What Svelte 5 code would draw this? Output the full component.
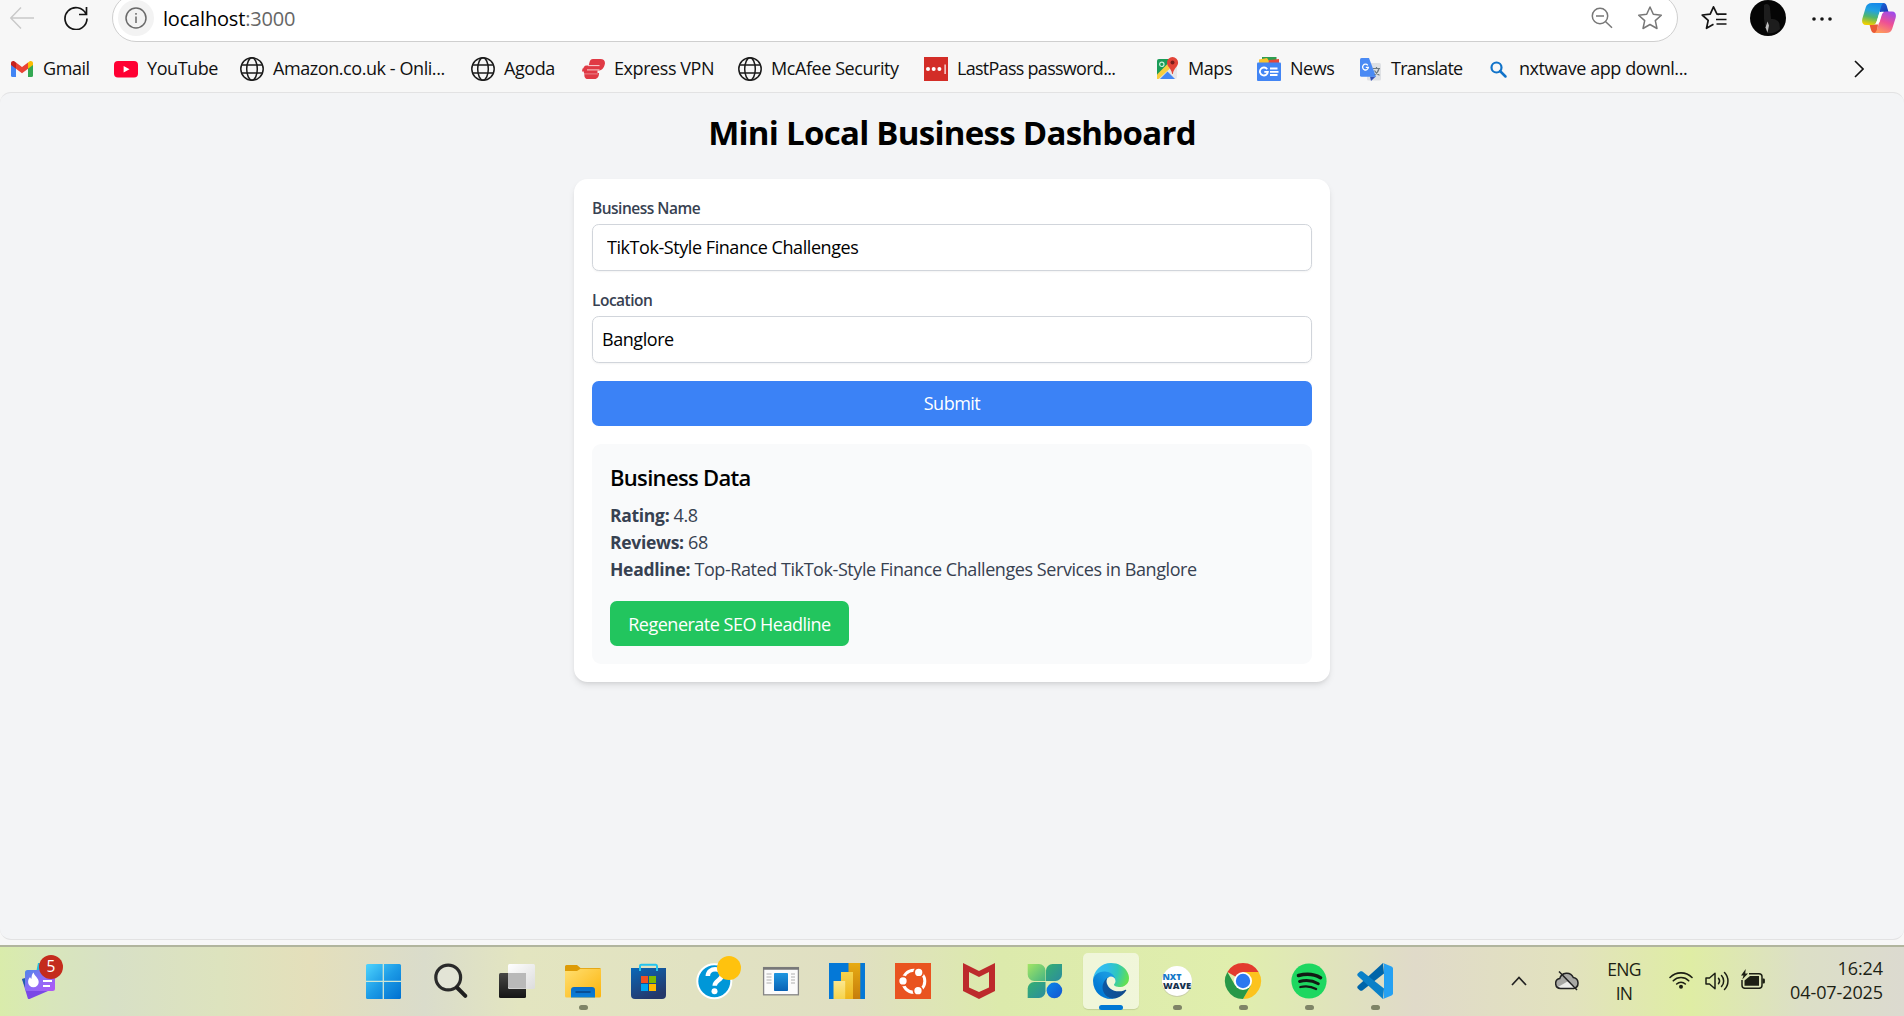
<script>
  const bookmarks = [
    { icon: 'gmail', label: 'Gmail' },
    { icon: 'youtube', label: 'YouTube' },
    { icon: 'globe', label: 'Amazon.co.uk - Onli...' },
    { icon: 'globe', label: 'Agoda' },
    { icon: 'vpn', label: 'Express VPN' },
    { icon: 'globe', label: 'McAfee Security' },
    { icon: 'lastpass', label: 'LastPass password...', tight: true },
    { icon: 'maps', label: 'Maps' },
    { icon: 'news', label: 'News' },
    { icon: 'translate', label: 'Translate', tight: true },
    { icon: 'find', label: 'nxtwave app downl...' }
  ];

  const apps = [
    { icon: 'windows' },
    { icon: 'search' },
    { icon: 'taskview' },
    { icon: 'folder', running: true },
    { icon: 'store' },
    { icon: 'help' },
    { icon: 'window' },
    { icon: 'powerbi' },
    { icon: 'ubuntu' },
    { icon: 'mcafee' },
    { icon: 'clover' },
    { icon: 'edge', active: true },
    { icon: 'nxtwave', running: true },
    { icon: 'chrome', running: true },
    { icon: 'spotify', running: true },
    { icon: 'vscode', running: true }
  ];

  let businessName = $state('TikTok-Style Finance Challenges');
  let location = $state('Banglore');
</script>

{#snippet mark(name)}
  <svg class="mark" viewBox="0 0 24 24" aria-hidden="true">
    {#if name === 'gmail'}
      <path d="M1 6.500v12A1.500 1.500 0 0 0 2.500 20H6V10.500z" fill="#4285f4" />
      <path d="M23 6.500v12a1.500 1.500 0 0 1-1.500 1.500H18v-9.500z" fill="#34a853" />
      <path d="M18 5.500l1.700-1.200C21 3.300 23 4.200 23 6v2l-5 3.800z" fill="#fbbc04" />
      <path d="M6 5.500L4.300 4.300C3 3.300 1 4.200 1 6v2l5 3.800z" fill="#c5221f" />
      <path d="M6 5.500l6 4.500 6-4.500v6.300L12 16.300 6 11.800z" fill="#ea4335" />
    {:else if name === 'youtube'}
      <rect x="0" y="4" width="24" height="16.500" rx="4" fill="#ff0033" />
      <path d="M9.600 9v6.500l5.900-3.250z" fill="#fff" />
    {:else if name === 'globe'}
      <g fill="none" stroke="#1b1b1b" stroke-width="1.500">
        <circle cx="12" cy="12" r="11.200" />
        <ellipse cx="12" cy="12" rx="5.300" ry="11.200" />
        <path d="M2 8h20M2 16h20" />
      </g>
    {:else if name === 'vpn'}
      <g fill="#e03a45">
        <path d="M12 2h7.500c3.300 0 5 2.200 4.300 5.200-.8 3.600-2.800 6.300-6.300 6.300H1.800c.4-3 1.400-5 3.700-5h2.200l.6-2.500C9 3.300 9.800 2 12 2z" />
        <path d="M1.500 11.500h15v5h-12c-1.500 0-1.800-.7-1.700-2H1z" />
        <path d="M3.500 16h14.500c0 3.500-1.500 6-4.500 6H6.500c-2.700 0-3.500-2.500-3-6z" />
      </g>
      <path d="M7 8.600h11.500M6 12.900h12.500" stroke="#f9e3e4" stroke-width=".9" />
      <path d="M4 16.900h13" stroke="#f0a3a8" stroke-width=".7" />
    {:else if name === 'lastpass'}
      <rect width="24" height="24" fill="#d32d27" />
      <g fill="#fff"><circle cx="4" cy="12" r="2" /><circle cx="9.700" cy="12" r="2" /><circle cx="15.400" cy="12" r="2" /><rect x="20.500" y="7.500" width="1.200" height="9.500" /></g>
    {:else if name === 'maps'}
      <rect x="2" y="2" width="20" height="20" rx="2" fill="#e7e7e7" />
      <path d="M2 4a2 2 0 0 1 2-2h14L2 19z" fill="#1a9c58" />
      <path d="M2 17.500L17 2.500 21 6 3.500 22H2z" fill="#f8ce3f" />
      <path d="M5 22l7.500-7.500L20 22z" fill="#4387f4" />
      <circle cx="6.800" cy="7.300" r="2.200" fill="none" stroke="#c9efd8" stroke-width="1.200" />
      <path d="M17.500 0a5.600 5.600 0 0 1 5.600 5.600c0 4.400-4.200 5.300-5.300 11.400h-.6C16.100 10.900 12 10 12 5.600A5.600 5.600 0 0 1 17.500 0z" fill="#e24438" />
      <circle cx="17.500" cy="5.600" r="2" fill="#7b1f1c" />
    {:else if name === 'news'}
      <path d="M5 0h14.500v6H5z" fill="#2f9e4f" />
      <path d="M2 2.500l8-1.500 4 6H2z" fill="#f9c22d" />
      <path d="M12 3l10-1v6H11z" fill="#e5483a" />
      <rect y="5.500" width="24" height="18.500" rx="1" fill="#4285f4" />
      <path d="M10.200 12.200a4 4 0 1 0 .7 2.600H7.300M13 11.500h7.500M13 14.800h8.500M13 18h7.500" fill="none" stroke="#fff" stroke-width="1.800" />
    {:else if name === 'translate'}
      <rect x="9" y="6" width="14" height="17.500" rx="1.500" fill="#dfe1e4" />
      <path d="M12 19.500h5.800L13 24z" fill="#3452b5" />
      <path d="M3.500 1H11l7 18.800H3.500A1.500 1.500 0 0 1 2 18.300V2.500A1.500 1.500 0 0 1 3.500 1z" fill="#4a8af4" />
      <path d="M9.800 8.300a2.900 2.900 0 1 0 .6 2H7.800" fill="none" stroke="#fff" stroke-width="1.300" />
      <path d="M15 11.500h7M18.500 10v1.500M21 11.500c-.7 3-2.500 5-4.500 6.200M16.500 13.500c1 2 3 4 5 4.800" fill="none" stroke="#6d7a80" stroke-width="1.200" />
    {:else if name === 'find'}
      <circle cx="10.500" cy="10.500" r="5" fill="none" stroke="#1173c9" stroke-width="2.200" />
      <path d="M14 14l5.500 5.500" stroke="#1173c9" stroke-width="2.500" stroke-linecap="round" />
    {/if}
  </svg>
{/snippet}

{#snippet app(name)}
  <svg class="app-icon" viewBox="0 0 36 36" aria-hidden="true">
    {#if name === 'windows'}
      <defs>
        <linearGradient id="win" x1="0" y1="0" x2="1" y2="1"><stop offset="0" stop-color="#4fd4fd" /><stop offset=".5" stop-color="#1c9be6" /><stop offset="1" stop-color="#0070d0" /></linearGradient>
      </defs>
      <rect x="-1" y="1" width="35" height="35" rx="1.500" fill="url(#win)" />
      <path d="M16.300 1v35M-1 18.300h35" stroke="#cfe6d5" stroke-width="1.300" />
    {:else if name === 'search'}
      <circle cx="15.200" cy="14.500" r="12.400" fill="#e6e7dc" fill-opacity=".7" stroke="#2a2a2a" stroke-width="3.200" />
      <path d="M24 24.500l8.300 8.300" stroke="#1f1f1f" stroke-width="4" stroke-linecap="round" />
    {:else if name === 'taskview'}
      <defs>
        <linearGradient id="tvd" x1="0" y1="0" x2="0" y2="1"><stop offset="0" stop-color="#474745" /><stop offset="1" stop-color="#151515" /></linearGradient>
        <linearGradient id="tvl" x1="0" y1="0" x2="1" y2="1"><stop offset="0" stop-color="#fff" /><stop offset="1" stop-color="#dcdcdc" /></linearGradient>
      </defs>
      <rect x="0" y="10" width="27" height="25" rx="1.500" fill="url(#tvd)" />
      <rect x="9" y="1" width="27" height="25" rx="1.500" fill="url(#tvl)" />
      <path d="M9 10h18v15.500H10.500L9 24z" fill="#b9b9b9" />
    {:else if name === 'folder'}
      <defs>
        <linearGradient id="fol" x1="0" y1="0" x2="1" y2="1"><stop offset="0" stop-color="#ffdf71" /><stop offset="1" stop-color="#fcb40c" /></linearGradient>
        <linearGradient id="folb" x1="0" y1="0" x2="0" y2="1"><stop offset="0" stop-color="#0a6cc4" /><stop offset="1" stop-color="#0a7fd9" /></linearGradient>
      </defs>
      <path d="M0 3.500A1.500 1.500 0 0 1 1.500 2H12l3.500 3H34.500A1.500 1.500 0 0 1 36 6.500V12H0z" fill="#dd9b06" />
      <path d="M0 8h12l3.500-2.300H36V33a1.500 1.500 0 0 1-1.500 1.500h-33A1.500 1.500 0 0 1 0 33z" fill="url(#fol)" />
      <path d="M6 34.500V27a3 3 0 0 1 3-3h18a3 3 0 0 1 3 3v7.500z" fill="url(#folb)" />
      <path d="M10.500 29h15" stroke="#08498c" stroke-width="1.700" />
    {:else if name === 'store'}
      <defs>
        <linearGradient id="sto" x1="0" y1="0" x2=".5" y2="1"><stop offset="0" stop-color="#0a68b8" /><stop offset="1" stop-color="#24386b" /></linearGradient>
      </defs>
      <path d="M0 5h35v27a4 4 0 0 1-4 4H4a4 4 0 0 1-4-4z" fill="url(#sto)" />
      <path d="M9 8V3a1.300 1.300 0 0 1 1.300-1.300h14.500A1.300 1.300 0 0 1 26 3v5" fill="none" stroke="#24c4ef" stroke-width="2" />
      <path d="M10 13h7v7h-7z" fill="#f25022" /><path d="M18 13h7v7h-7z" fill="#7fba00" />
      <path d="M10 21h7v7h-7z" fill="#00a4ef" /><path d="M18 21h7v7h-7z" fill="#ffb900" />
    {:else if name === 'help'}
      <circle cx="17.300" cy="18.300" r="17" fill="#0097d8" stroke="#fff" stroke-width="2" />
      <path d="M10.800 13c.3-9 14.500-8.500 14.200-.8-.2 5-7.200 5.200-7.300 10.500" fill="none" stroke="#fff" stroke-width="4.500" />
      <circle cx="17.500" cy="28.200" r="3" fill="#fff" />
    {:else if name === 'window'}
      <defs><linearGradient id="wnd" x1="0" y1="0" x2="0" y2="1"><stop offset="0" stop-color="#1e96e0" /><stop offset="1" stop-color="#0862b5" /></linearGradient></defs>
      <rect x=".6" y="4.600" width="34.800" height="27.200" fill="#fbfbfb" stroke="#858585" stroke-width="1.300" />
      <path d="M0 5.500h36" stroke="#777" stroke-width="2.500" />
      <rect x="11" y="10" width="14" height="18" rx=".8" fill="url(#wnd)" />
      <path d="M3.500 11h5m-5 3h5m-5 3h5m-5 3h5M28 11h4m-4 3h4m-4 3h4m-4 3h4" stroke="#c9c9c9" stroke-width="1.500" />
    {:else if name === 'powerbi'}
      <defs>
        <linearGradient id="pb1" x1="0" y1="0" x2="0" y2="1"><stop offset="0" stop-color="#e7ab13" /><stop offset="1" stop-color="#c67d0c" /></linearGradient>
        <linearGradient id="pb2" x1="0" y1="0" x2="0" y2="1"><stop offset="0" stop-color="#f5d34f" /><stop offset="1" stop-color="#eeb41a" /></linearGradient>
        <linearGradient id="pb3" x1="0" y1="0" x2="0" y2="1"><stop offset="0" stop-color="#fbe68e" /><stop offset="1" stop-color="#f6d44c" /></linearGradient>
      </defs>
      <path d="M0 0h36v36H0z" fill="#0478d7" />
      <path d="M19.500 0h11.800v36H19.500z" fill="url(#pb1)" />
      <path d="M12 9h12v27H12z" fill="url(#pb2)" />
      <path d="M4.500 18h11.700v18H4.500z" fill="url(#pb3)" />
    {:else if name === 'ubuntu'}
      <path d="M0 0h36v36H0z" fill="#e95420" />
      <circle cx="18.800" cy="18.300" r="11" fill="none" stroke="#fff" stroke-width="3" />
      <g fill="#fff" stroke="#e95420" stroke-width="1.700">
        <circle cx="8" cy="17.900" r="4.500" /><circle cx="23.700" cy="9.400" r="4.500" /><circle cx="23" cy="27.700" r="4.500" />
      </g>
    {:else if name === 'mcafee'}
      <path d="M2 0l16 8L34 0v28l-16 8-16-8z M8 9v15.500l10 4.500 10-4.500V9l-10 5z" fill="#bd2a2c" fill-rule="evenodd" />
    {:else if name === 'clover'}
      <defs>
        <linearGradient id="cl1" x1="0" y1="0" x2="1" y2="1"><stop offset="0" stop-color="#a2e564" /><stop offset="1" stop-color="#46b583" /></linearGradient>
        <linearGradient id="cl2" x1="0" y1="0" x2="1" y2="1"><stop offset="0" stop-color="#35b071" /><stop offset="1" stop-color="#2b8c9e" /></linearGradient>
        <linearGradient id="cl3" x1="0" y1="0" x2="1" y2="1"><stop offset="0" stop-color="#0a87ea" /><stop offset="1" stop-color="#1455d0" /></linearGradient>
      </defs>
      <path d="M.7 1H12a6.500 6.500 0 0 1 6.500 6.500V18H7.200A6.500 6.500 0 0 1 .7 11.500z" fill="url(#cl1)" />
      <path d="M35 1H25.500A6.500 6.500 0 0 0 19 7.500V18h9.500A6.500 6.500 0 0 0 35 11.500z" fill="url(#cl2)" />
      <path d="M.7 35H12a6.500 6.500 0 0 0 6.500-6.500V19H7.200A6.500 6.500 0 0 0 .7 25.500z" fill="url(#cl2)" />
      <circle cx="27.400" cy="27.400" r="7.800" fill="url(#cl3)" />
    {:else if name === 'edge'}
      <defs>
        <linearGradient id="ed1" x1="63" y1="178" x2="241" y2="178" gradientUnits="userSpaceOnUse"><stop offset="0" stop-color="#0c59a4" /><stop offset="1" stop-color="#114a8b" /></linearGradient>
        <linearGradient id="ed2" x1="157" y1="95" x2="46" y2="222" gradientUnits="userSpaceOnUse"><stop offset="0" stop-color="#1b9de2" /><stop offset=".3" stop-color="#1595df" /><stop offset=".7" stop-color="#0680d7" /><stop offset="1" stop-color="#0078d4" /></linearGradient>
        <radialGradient id="ed3" cx="26" cy="46" r="236" gradientUnits="userSpaceOnUse"><stop offset="0" stop-color="#35c1f1" /><stop offset=".35" stop-color="#31bde9" /><stop offset=".65" stop-color="#2fc7bd" /><stop offset="1" stop-color="#63e052" /></radialGradient>
      </defs>
      <g transform="scale(.1406) translate(-4.630 -4.920)">
        <path d="M235.680 195.460a93.730 93.730 0 0 1-10.540 4.710 101.870 101.870 0 0 1-35.900 6.460c-47.320 0-88.540-32.550-88.540-74.320A31.480 31.480 0 0 1 117.130 105c-42.800 1.800-53.800 46.400-53.800 72.530 0 73.880 68.090 81.370 82.760 81.370 7.910 0 19.840-2.300 27-4.560l1.310-.44a128.340 128.340 0 0 0 66.600-52.800 4 4 0 0 0-5.320-5.640z" fill="url(#ed1)" />
        <path d="M110.340 246.340A79.200 79.200 0 0 1 87.600 225a80.720 80.720 0 0 1 29.530-120c3.120-1.470 8.450-4.130 15.540-4a32.350 32.350 0 0 1 25.690 13 31.880 31.880 0 0 1 6.360 18.660c0-.21 24.460-79.600-80-79.600-43.900 0-80 41.660-80 78.210a130.150 130.150 0 0 0 12.110 56 128 128 0 0 0 156.380 67.110 75.550 75.550 0 0 1-62.780-8z" fill="url(#ed2)" />
        <path d="M156.940 153.780c-.81 1.050-3.300 2.500-3.300 5.660 0 2.610 1.700 5.120 4.720 7.230 14.380 10 41.490 8.680 41.560 8.680a59.560 59.560 0 0 0 30.270-8.350A61.380 61.380 0 0 0 260.620 114.100c.26-22.410-8-37.310-11.340-43.910C228.090 28.760 182.350 4.920 132.610 4.920a128 128 0 0 0-128 126.200C5.090 94.570 41.400 65.050 84.610 65.050c3.500 0 23.460.34 42 10.070 16.340 8.580 24.900 18.940 30.850 29.210 6.180 10.670 7.280 24.150 7.280 29.520 0 5.370-2.740 13.330-7.800 19.930z" fill="url(#ed3)" />
      </g>
    {:else if name === 'nxtwave'}
      <circle cx="18" cy="18.800" r="15.200" fill="#c9cfa8" />
      <circle cx="18" cy="18" r="15" fill="#fff" />
      <text class="nxt" x="3.500" y="16.500" textLength="19" lengthAdjust="spacingAndGlyphs">NXT</text>
      <text class="nxt dark" x="4" y="25.800" textLength="28" lengthAdjust="spacingAndGlyphs">WAVE</text>
    {:else if name === 'chrome'}
      <path d="M18 18L2.400 9A18 18 0 0 1 33.600 9z" fill="#e33b2e" />
      <path d="M18 9h15.600A18 18 0 0 1 18 36l7.800-13.500z" fill="#fcc31e" />
      <path d="M10.200 22.500L2.400 9A18 18 0 0 0 18 36l7.800-13.500z" fill="#279847" />
      <circle cx="18" cy="18" r="9" fill="#fff" /><circle cx="18" cy="18" r="7.200" fill="#2b78f0" />
    {:else if name === 'spotify'}
      <circle cx="18" cy="18" r="17.600" fill="#1ed760" />
      <g fill="none" stroke="#121a14" stroke-linecap="round">
        <path d="M7.500 12.500c7.500-2 16-1.300 22 2.200" stroke-width="3.600" />
        <path d="M8.500 18.500c6.500-1.700 13.300-.9 18.800 2.200" stroke-width="2.900" />
        <path d="M9.300 24c5.500-1.300 11-.7 15.800 2" stroke-width="2.300" />
      </g>
    {:else if name === 'vscode'}
      <path d="M26 0L1 22.700c-1 1-1 2 0 3l2 1.700c.7.600 1.600.600 2.400 0L27 10.500z" fill="#0065a9" />
      <path d="M26 36L1 13.300c-1-1-1-2 0-3l2-1.700c.7-.6 1.600-.6 2.400 0L27 25.500z" fill="#0a80c8" />
      <path d="M26 0l8.500 3.600c1 .5 1.500 1.200 1.500 2.200v24.400c0 1-.5 1.700-1.500 2.200L26 36c.7-.7 1-1.500 1-2.500v-31c0-1-.3-1.800-1-2.500z" fill="#26a1f2" />
    {/if}
  </svg>
{/snippet}

<div class="screen">
  <header class="toolbar">
    <svg class="nav back" viewBox="0 0 24 24"><path d="M11 1.500L.800 12 11 22.500M1 12h23" /></svg>
    <svg class="nav reload" viewBox="0 0 24 24"><path d="M22 8A11 11 0 1 0 23 12.500M22.500 1v7.500H15" /></svg>
    <div class="address">
      <span class="info">
        <svg viewBox="0 0 22 22"><circle cx="11" cy="11" r="10" /><path d="M11 9.500v6.500M11 6v1.700" /></svg>
      </span>
      <span class="url">localhost<span class="port">:3000</span></span>
      <svg class="zoomout" viewBox="0 0 22 22"><circle cx="9" cy="9" r="7.700" /><path d="M14.700 14.700l6.300 6M5 9h8" /></svg>
      <svg class="star" viewBox="0 0 26 26"><path d="M13 2l3.300 7.300 8 .9-6 5.400 1.700 7.900L13 19.500l-7 4 1.700-7.900-6-5.400 8-.9z" /></svg>
    </div>
    <svg class="favs" viewBox="0 0 26 26"><path d="M18 9.300l-2-.2L12.500 1.800 9.200 9.100l-8 .9 6 5.400-1.700 7.900 7-4M16.500 9.200h9M15 14.500h10.500M15.500 19h10" /></svg>
    <svg class="avatar" viewBox="0 0 36 36"><circle cx="18" cy="18" r="18" fill="#050505" /><path d="M14 5c2-2 6-1 6 3l1 11c5 0 8 2 8.500 5l.5 5c-4 4-9 5-13 4l-2-8-1-6z" fill="#1d1d1d" /><path d="M17.500 21.500l1.500 4-1.500 7-2-5z" fill="#bdbdbd" /></svg>
    <svg class="more" viewBox="0 0 20 4"><circle cx="2" cy="2" r="1.800" /><circle cx="10" cy="2" r="1.800" /><circle cx="18" cy="2" r="1.800" /></svg>
    <svg class="copilot" viewBox="0 0 34 30">
      <defs>
        <linearGradient id="co1" x1=".6" y1="0" x2=".4" y2="1"><stop offset="0" stop-color="#1488ea" /><stop offset=".35" stop-color="#22a3e0" /><stop offset=".65" stop-color="#52b66a" /><stop offset="1" stop-color="#f0d000" /></linearGradient>
        <linearGradient id="co2" x1=".7" y1="0" x2=".3" y2="1"><stop offset="0" stop-color="#a04be8" /><stop offset=".5" stop-color="#ee5095" /><stop offset="1" stop-color="#ff9a5c" /></linearGradient>
        <linearGradient id="co3" x1="0" y1="0" x2="1" y2="1"><stop offset="0" stop-color="#1c6fe0" /><stop offset="1" stop-color="#1538b0" /></linearGradient>
      </defs>
      <path d="M15 0h6.500c2 0 2.800 1.500 3.400 3.500l1.600 5.500H18z" fill="url(#co3)" />
      <path d="M7.500 21.500H16l-1 8.500h-2.500C10 30 9.300 28 8.600 25.500z" fill="#ea5a35" />
      <path d="M10 0h11.500c-1.500 1-2.200 2.500-3 5.500l-3.500 12c-.9 3-2.200 4.500-5 4.500H4c-3.500 0-4.500-3-3.600-6.500L3.700 4.500C4.600 1.500 6.500 0 10 0z" fill="url(#co1)" />
      <path d="M24 8.500h6c3.500 0 4.500 3 3.600 6.500l-3.300 10.500c-.9 3-2.800 4.500-6.300 4.500H12.500c1.500-1 2.300-2.500 3.100-5.500l3.400-11.500c.9-3 2.200-4.500 5-4.500z" fill="url(#co2)" />
      <path d="M13.500 20.500c.7-.7 1.100-1.700 1.500-3l2-6.500c.5-1.500 1.200-2.200 2.600-2.200h2.400c-1.400 1-2 2.200-2.500 4l-1.700 5.700c-.4 1.300-1.200 2-2.300 2z" fill="#fff" />
    </svg>
  </header>

  <nav class="bookmarks">
    {#each bookmarks as b}
      <a class="bookmark" class:tight={b.tight} href="#top">{@render mark(b.icon)}<span>{b.label}</span></a>
    {/each}
    <svg class="chevron" viewBox="0 0 10 18"><path d="M1 1l8 8-8 8" /></svg>
  </nav>

  <main class="page">
    <h1>Mini Local Business Dashboard</h1>
    <section class="card">
      <label class="field">
        <span class="label">Business Name</span>
        <input class="indented" bind:value={businessName} />
      </label>
      <label class="field">
        <span class="label">Location</span>
        <input bind:value={location} />
      </label>
      <button class="submit">Submit</button>
      <div class="panel">
        <h2>Business Data</h2>
        <p><strong>Rating:</strong> 4.8</p>
        <p><strong>Reviews:</strong> 68</p>
        <p><strong>Headline:</strong> Top-Rated TikTok-Style Finance Challenges Services in Banglore</p>
        <button class="regen">Regenerate SEO Headline</button>
      </div>
    </section>
  </main>

  <footer class="taskbar">
    <div class="widgets">
      <svg viewBox="0 0 33 36">
        <defs><linearGradient id="wd" x1="0" y1="0" x2="1" y2="1"><stop offset="0" stop-color="#4e86e8" /><stop offset=".5" stop-color="#8c6cf6" /><stop offset="1" stop-color="#b157f5" /></linearGradient></defs>
        <path d="M16 0h10v10H14z" fill="#22bfe0" />
        <path d="M0 16l4-1 22 13-18.500 8c-1 .3-1.500 0-1.800-1z" fill="#7a48e6" />
        <path d="M0 16l4-1v12z" fill="#1f63a8" />
        <rect x="3" y="7" width="30" height="21" rx="2.500" fill="url(#wd)" />
        <path d="M11.500 9.500c1 3.500 5.200 5.500 5.200 9.500a5.300 5.300 0 0 1-10.600 0c0-2.500 1-3.800 2-5 .3 1 .7 1.500 1.400 1.800 0-2.500.5-4.800 2-6.300z" fill="#fff" />
        <path d="M21 18h9M21 23h7" stroke="#fff" stroke-width="2" />
      </svg>
      <span class="badge">5</span>
    </div>
    <div class="apps">
      {#each apps as a}
        <div class="app" class:active={a.active} class:running={a.running}>
          {@render app(a.icon)}
          {#if a.icon === 'help'}<span class="alert"></span>{/if}
        </div>
      {/each}
    </div>
    <div class="tray">
      <svg class="up" viewBox="0 0 16 10"><path d="M1 9l7-7.500L15 9" /></svg>
      <svg class="cloud" viewBox="0 0 24 20">
        <path d="M5.500 17.500a5 5 0 0 1-.8-9.900A7.200 7.200 0 0 1 18.300 6.500a5.600 5.600 0 0 1 .3 11z" fill="#a9a9a5" />
        <path d="M3 16l9.500-5.500L21 16l-3 1.500H6z" fill="#ededea" />
        <path d="M5.500 17.500a5 5 0 0 1-.8-9.900A7.200 7.200 0 0 1 18.300 6.500a5.600 5.600 0 0 1 .3 11z" fill="none" stroke="#222" stroke-width="1.500" />
        <path d="M4 .5l18 18.500" stroke="#222" stroke-width="1.500" />
      </svg>
      <div class="lang"><span>ENG</span><span>IN</span></div>
      <svg class="wifi" viewBox="0 0 24 18"><g fill="none" stroke="#1c1f14" stroke-width="1.600" stroke-linecap="round"><path d="M1 6.500a15.500 15.500 0 0 1 22 0M4.300 9.800a10.800 10.800 0 0 1 15.400 0M7.700 13a6.200 6.200 0 0 1 8.600 0" /></g><circle cx="12" cy="15.700" r="2" fill="#1c1f14" /></svg>
      <svg class="sound" viewBox="0 0 24 20"><g fill="none" stroke="#1c1f14" stroke-width="1.500" stroke-linecap="round" stroke-linejoin="round"><path d="M1 7h3.500L10 2.300v15.400L4.500 13H1z" /><path d="M13.500 7.300c1.300 1.600 1.300 3.800 0 5.400M16.500 4.500c2.900 3.200 2.900 7.800 0 11M19.500 1.500c4.600 4.800 4.600 12.200 0 17" /></g></svg>
      <svg class="battery" viewBox="0 0 24 20"><path d="M8 4.700h10a3 3 0 0 1 3 3v8.600a3 3 0 0 1-3 3H4a3 3 0 0 1-3-3V11" fill="none" stroke="#1c1f14" stroke-width="1.500" /><path d="M21.500 9.500h1.200a1.200 1.200 0 0 1 1.200 1.200v2.600a1.200 1.200 0 0 1-1.200 1.200h-1.200zM3.500 11.500L9 7h9v9.700H3.500zM4.700 0L0 6.500h2.500L1.300 10.500 7 4.500H4.200z" fill="#1c1f14" /></svg>
      <div class="clock"><span>16:24</span><span>04-07-2025</span></div>
    </div>
  </footer>
</div>

<style>
  :global(body) { background: #f7f7f7; }
  .screen { width: 1904px; height: 1016px; display: flex; flex-direction: column; overflow: hidden; background: #f7f7f7; color: #000; font-family: "Open Sans", "Noto Sans", sans-serif; font-size: 18px; }
  svg { display: block; flex: none; }
  .toolbar { height: 42px; display: flex; flex: none; align-items: flex-start; }
  .nav { width: 24px; height: 24px; fill: none; stroke: #151515; stroke-width: 1.700; }
  .back { margin: 6px 0 0 10px; stroke: #c9c9c9; stroke-width: 1.400; }
  .reload { margin: 6px 24px 0 30px; }
  .address { width: 1566px; height: 48px; margin-top: -6px; box-sizing: border-box; border: 1px solid #cfcfcf; border-bottom-width: 1.500px; border-radius: 24px; background: #fff; display: flex; align-items: center; padding: 0 14px 0 5px; flex: none; }
  .info { width: 36px; height: 36px; border-radius: 50%; background: #f3f3f3; display: flex; align-items: center; justify-content: center; }
  .info svg { width: 22px; height: 22px; fill: none; stroke: #6a6a6a; stroke-width: 1.500; }
  .url { margin-left: 9px; flex: 1; font-size: 20px; letter-spacing: -.18px; }
  .port { color: #666; }
  .zoomout { width: 22px; height: 22px; fill: none; stroke: #777; stroke-width: 1.500; margin-right: 24px; }
  .star { width: 26px; height: 26px; fill: none; stroke: #777; stroke-width: 1.500; stroke-linejoin: round; }
  .favs { width: 26px; height: 26px; margin: 5px 0 0 23px; fill: none; stroke: #151515; stroke-width: 1.700; stroke-linejoin: round; }
  .avatar { width: 36px; height: 36px; margin-left: 23px; }
  .more { width: 20px; height: 4px; margin: 17px 0 0 26px; fill: #151515; }
  .copilot { width: 34px; height: 30px; margin: 3px 0 0 30px; }
  .bookmarks { height: 50px; flex: none; display: grid; align-items: center; padding: 4px 0 0 10px; box-sizing: border-box; grid-template-columns: 104px 126px 231px 110px 157px 186px 231px 102px 101px 128px 368px 10px; }
  .bookmark { display: flex; align-items: center; gap: 9px; color: #111; text-decoration: none; white-space: nowrap; letter-spacing: -.43px; line-height: 24px; }
  .bookmark.tight { letter-spacing: -.72px; }
  .bookmark span { margin-top: -2px; }
  .mark { width: 24px; height: 24px; }
  .chevron { width: 10px; height: 18px; fill: none; stroke: #111; stroke-width: 1.600; }
  .page { height: 848px; box-sizing: border-box; flex: none; border: 1px solid #e2e2e3; border-width: 1px 0; border-radius: 11px; background: #f3f4f6; display: flex; flex-direction: column; align-items: center; padding-top: 20px; }
  h1 { margin: 0 0 25px; font-size: 33px; line-height: 40.500px; font-weight: 700; letter-spacing: -.72px; white-space: nowrap; }
  .card { width: 756px; box-sizing: border-box; padding: 18px; border-radius: 13.500px; background: #fff; box-shadow: 0 4px 7px -1px rgba(0, 0, 0, .1), 0 2px 4px -2px rgba(0, 0, 0, .1); }
  .field { display: block; margin-bottom: 18px; }
  .label { display: block; font-size: 15.500px; line-height: 22.500px; font-weight: 600; letter-spacing: -.5px; color: #374151; margin-bottom: 4.500px; }
  input { width: 720px; height: 47px; box-sizing: border-box; border: 1px solid #d1d5db; border-radius: 6.750px; padding: 0 9px; background: #fff; color: #000; font: inherit; letter-spacing: -.44px; box-shadow: 0 1px 2px rgba(0, 0, 0, .05); display: block; }
  .indented { padding-left: 14px; }
  button { border: 0; border-radius: 6.750px; color: #fff; font: inherit; letter-spacing: -.5px; height: 45px; padding: 0 18px; display: block; }
  .submit { width: 720px; background: #3b82f6; }
  .panel { margin-top: 18px; height: 220px; box-sizing: border-box; padding: 18px; border-radius: 9px; background: #f9fafb; }
  h2 { margin: 0 0 9px; font-size: 22px; line-height: 31.500px; font-weight: 600; letter-spacing: -.68px; }
  p { margin: 0; line-height: 27px; letter-spacing: -.43px; color: #374151; white-space: nowrap; }
  strong { font-size: 17.500px; letter-spacing: -.3px; }
  .regen { width: 239px; margin-top: 18px; background: #22c55e; padding: 0; }
  .taskbar { margin-top: 5px; flex: 1; border-top: 2px solid #b1b59e; box-sizing: border-box; display: flex; align-items: flex-start; background: linear-gradient(90deg, #d9ecab 0, #d8e6bb 50px, #d8e0c6 115px, #dde3be 220px, #e4dfbb 310px, #dadccb 425px, #e3e5c0 520px, #e1e2c2 700px, #e0dfc2 850px, #dceaac 1000px, #e0eead 1240px, #e0dac9 1415px, #e2e2be 1570px, #dfeda4 1690px, #dcdfc6 1800px, #dcdad0 1904px); }
  .widgets { position: relative; width: 33px; margin: 16px 0 0 22px; }
  .widgets svg { width: 33px; height: 36px; }
  .badge { position: absolute; left: 17px; top: -8px; width: 24px; height: 24px; border-radius: 50%; background: #c42b1c; color: #fff; font-size: 15.500px; line-height: 23px; text-align: center; }
  .apps { display: flex; gap: 10px; margin: 6px 0 0 302px; }
  .app { position: relative; width: 56px; height: 56px; border-radius: 5px; display: flex; justify-content: center; padding-top: 10px; box-sizing: border-box; }
  .app-icon { width: 36px; height: 36px; overflow: visible; }
  .active { background: rgba(255, 255, 255, .55); box-shadow: 0 1px 1px rgba(0, 0, 0, .12); }
  .running::after, .active::after { content: ""; position: absolute; bottom: -1px; left: 24px; width: 9px; height: 5px; border-radius: 3px; background: #7f8467; }
  .active::after { left: 16px; width: 24px; background: #0078d4; }
  .alert { position: absolute; left: 30px; top: 3px; width: 24px; height: 24px; border-radius: 50%; background: #ffc20e; }
  .nxt { font: 800 9px/9px "Open Sans", sans-serif; fill: #1478c8; }
  .dark { fill: #17324f; }
  .tray { display: flex; margin-left: auto; padding-right: 21px; color: #1c1f14; height: 60px; }
  .up { width: 16px; height: 10px; margin: 29px 28px 0 0; fill: none; stroke: #222; stroke-width: 1.700; }
  .cloud { width: 24px; height: 20px; margin: 24px 28px 0 0; }
  .lang, .clock { display: flex; flex-direction: column; letter-spacing: -.1px; line-height: 24px; }
  .lang { width: 34px; align-items: center; margin: 10px 28px 0 0; font-size: 17.500px; letter-spacing: -.7px; }
  .wifi { width: 24px; height: 18px; margin: 24px 12px 0 0; }
  .sound { width: 24px; height: 20px; margin: 24px 12px 0 0; }
  .battery { width: 24px; height: 20px; margin: 22px 0 0; }
  .clock { width: 118px; align-items: flex-end; margin-top: 9px; }
</style>
